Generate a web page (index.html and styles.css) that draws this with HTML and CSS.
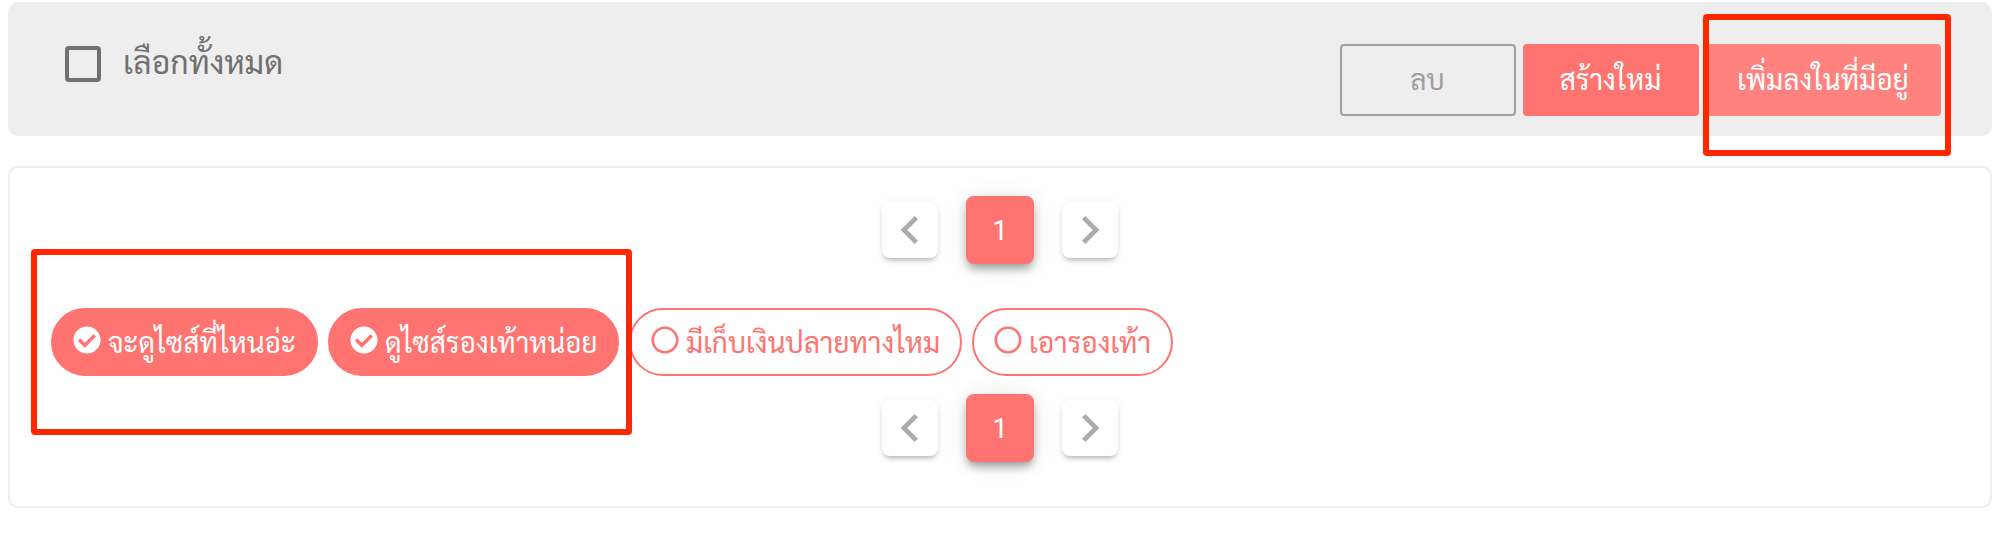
FILE: index.html
```html
<!DOCTYPE html>
<html lang="th">
  <head>
    <meta charset="utf-8">
    <meta name="viewport" content="width=device-width, initial-scale=1.0">
    <title>จัดการข้อความ</title>
    <link rel="stylesheet" href="styles.css">
  </head>
  <body>
    <svg class="sprite" aria-hidden="true">
      <symbol id="chevron-left" viewBox="0 0 24 24"><path d="M15.41 7.41L14 6l-6 6 6 6 1.41-1.41L10.83 12z"/></symbol>
      <symbol id="chevron-right" viewBox="0 0 24 24"><path d="M8.59 16.59L10 18l6-6-6-6-1.41 1.41L13.17 12z"/></symbol>
      <symbol id="check-circle" viewBox="0 0 512 512"><path d="M504 256c0 137-111 248-248 248S8 393 8 256 119 8 256 8s248 111 248 248zM227.300 387.300l184-184c6.200-6.200 6.200-16.400 0-22.600l-22.600-22.600c-6.200-6.200-16.400-6.200-22.600 0L216 308.100l-70.100-70.100c-6.200-6.200-16.400-6.200-22.600 0l-22.600 22.600c-6.200 6.200-6.200 16.400 0 22.600l104 104c6.200 6.300 16.400 6.300 22.600.1z"/></symbol>
      <symbol id="circle" viewBox="0 0 512 512"><path d="M256 8C119 8 8 119 8 256s111 248 248 248 248-111 248-248S393 8 256 8zm0 448c-110.500 0-200-89.500-200-200S145.500 56 256 56s200 89.500 200 200-89.500 200-200 200z"/></symbol>
    </svg>

    <div class="toolbar">
      <label class="select-all">
        <span class="checkbox"></span>
        <span class="select-all-text">เลือกทั้งหมด</span>
      </label>
      <div class="actions">
        <button class="btn btn-outline">ลบ</button>
        <button class="btn btn-primary">สร้างใหม่</button>
        <div class="marked">
          <button class="btn btn-primary btn-hover">เพิ่มลงในที่มีอยู่</button>
          <div class="marker marker-button"></div>
        </div>
      </div>
    </div>

    <div class="panel">
      <div class="pagination">
        <button class="page-nav"><svg><use href="#chevron-left"/></svg></button>
        <button class="page-item">1</button>
        <button class="page-nav"><svg><use href="#chevron-right"/></svg></button>
      </div>
      <div class="chips">
        <div class="chip chip-active chip-1"><svg><use href="#check-circle"/></svg><span>จะดูไซส์ที่ไหนอ่ะ</span></div>
        <div class="chip chip-active chip-2"><svg><use href="#check-circle"/></svg><span>ดูไซส์รองเท้าหน่อย</span></div>
        <div class="chip chip-3"><svg><use href="#circle"/></svg><span>มีเก็บเงินปลายทางไหม</span></div>
        <div class="chip chip-4"><svg><use href="#circle"/></svg><span>เอารองเท้า</span></div>
        <div class="marker marker-chips"></div>
      </div>
      <div class="pagination">
        <button class="page-nav"><svg><use href="#chevron-left"/></svg></button>
        <button class="page-item">1</button>
        <button class="page-nav"><svg><use href="#chevron-right"/></svg></button>
      </div>
    </div>
  </body>
</html>
```
FILE: styles.css
```css
* { box-sizing: border-box; }

body
{
    margin: 0;
    padding: 2px 10px 0 8px;
    background: #fff;
    font-family: Sarabun, "Noto Sans Thai", "Noto Sans", sans-serif;
    font-size: 28px;
}

button
{
    font: inherit;
    padding: 0;
    border: 0;
}

svg { fill: currentColor; flex: none; }

.sprite { display: none; }

.toolbar
{
    display: flex;
    justify-content: space-between;
    align-items: flex-start;
    height: 134px;
    padding: 42px 51px 0 57px;
    border-radius: 10px;
    background: #eee;
}

.select-all
{
    display: flex;
    align-items: center;
    height: 40px;
    color: #707070;
    font-size: 32px;
    white-space: nowrap;
}

.select-all-text { padding-bottom: 7px; }

.checkbox
{
    width: 36px;
    height: 36px;
    margin-right: 22px;
    border: 4px solid #707070;
    border-radius: 4px;
}

.actions { display: flex; gap: 7px; }

.btn
{
    display: flex;
    justify-content: center;
    align-items: center;
    width: 176px;
    height: 72px;
    padding: 0 1px 5px 0;
    border-radius: 4px;
    white-space: nowrap;
}

.btn-outline
{
    border: 2px solid #9e9e9e;
    background: transparent;
    color: #9e9e9e;
}

.btn-primary { background: #ff7370; color: #fff; }

.btn-hover { width: 235px; background: #ff827f; }

.marked { position: relative; }

/* red highlight frames */
.marker
{
    position: absolute;
    border: 6px solid #ff2600;
    border-radius: 4px;
    pointer-events: none;
}

.marker-button { left: -3px; top: -30px; width: 248px; height: 142px; }

.marker-chips { left: -20px; top: -59px; width: 601px; height: 186px; }

.panel
{
    height: 342px;
    margin-top: 30px;
    padding: 28px 41px 0;
    border: 2px solid #eee;
    border-radius: 10px;
}

.pagination
{
    display: flex;
    justify-content: center;
    align-items: center;
    gap: 28px;
    height: 68px;
}

.page-nav
{
    display: flex;
    justify-content: center;
    align-items: center;
    width: 56px;
    height: 56px;
    border-radius: 8px;
    background: #fff;
    color: #aaa;
    box-shadow: 0 4px 5px -2px rgba(0, 0, 0, .26), 0 1px 8px rgba(0, 0, 0, .08);
}

.page-nav svg { width: 56px; height: 56px; }

.page-item
{
    width: 68px;
    height: 68px;
    border-radius: 8px;
    background: #ff7370;
    color: #fff;
    font-family: Roboto, sans-serif;
    box-shadow: 0 6px 10px -2px rgba(0, 0, 0, .36), 0 2px 20px rgba(0, 0, 0, .12);
}

.chips
{
    position: relative;
    display: flex;
    gap: 10px;
    margin: 44px 0 18px;
}

.chip
{
    display: flex;
    align-items: center;
    height: 68px;
    padding: 0 0 3px 20px;
    border: 2px solid #ff7370;
    border-radius: 34px;
    color: #ff7370;
    white-space: nowrap;
}

.chip svg { width: 28px; height: 28px; margin: -2px 7px 0 0; }

.chip-active { background: #ff7370; color: #fff; }

.chip-1 { width: 267px; }
.chip-2 { width: 291px; }
.chip-3 { width: 333px; }
.chip-4 { width: 201px; }
```
